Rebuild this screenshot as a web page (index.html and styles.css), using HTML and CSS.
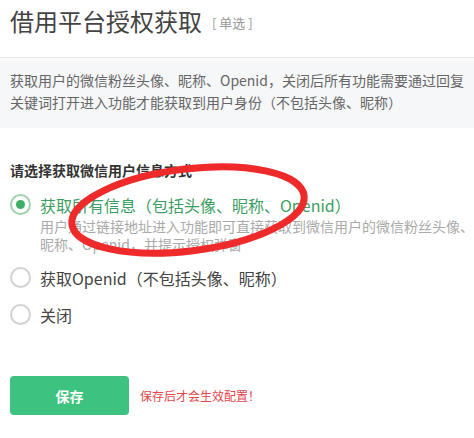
FILE: index.html
```html
<!DOCTYPE html>
<html lang="zh">
<head>
<meta charset="utf-8">
<link rel="stylesheet" href="styles.css">
</head>
<body>
<div class="page">
  <header class="head">
    <h1 class="title">借用平台授权获取</h1>
    <span class="tag">[ 单选 ]</span>
  </header>
  <div class="notice">获取用户的微信粉丝头像、昵称、Openid，关闭后所有功能需要通过回复关键词打开进入功能才能获取到用户身份（不包括头像、昵称）</div>
  <div class="section">
    <div class="question">请选择获取微信用户信息方式</div>
    <div class="option checked">
      <span class="radio"><span class="dot"></span></span>
      <div class="opt-body">
        <div class="opt-label">获取所有信息（包括头像、昵称、Openid）</div>
        <div class="opt-desc">用户通过链接地址进入功能即可直接获取到微信用户的微信粉丝头像、昵称、Openid，并提示授权弹窗</div>
      </div>
    </div>
    <div class="option">
      <span class="radio"></span>
      <div class="opt-body"><div class="opt-label">获取Openid（不包括头像、昵称）</div></div>
    </div>
    <div class="option">
      <span class="radio"></span>
      <div class="opt-body"><div class="opt-label">关闭</div></div>
    </div>
  </div>
  <div class="actions">
    <button class="btn">保存</button>
    <span class="hint">保存后才会生效配置！</span>
  </div>
  <svg class="mark" width="474" height="438" viewBox="0 0 474 438">
    <ellipse cx="188" cy="210" rx="117" ry="41" transform="rotate(-7 188 210)" fill="none" stroke="#ee2a2a" stroke-width="7"/>
  </svg>
</div>
</body>
</html>
```

FILE: styles.css
```css
* { box-sizing: border-box; }
html, body { margin: 0; padding: 0; background: #fff; }
body {
  font-family: "Noto Sans CJK SC", "Noto Sans", sans-serif;
  color: #444;
  width: 474px;
  height: 438px;
  overflow: hidden;
}
.page { position: relative; height: 438px; }
.head {
  height: 57px;
  padding: 5px 10px 0;
  display: flex;
  align-items: flex-start;
}
.title {
  margin: 0;
  font-size: 24px;
  line-height: 32px;
  font-weight: normal;
  color: #444;
}
.tag {
  font-size: 13px;
  color: #999;
  margin-left: 10px;
  line-height: 32px;
  padding-top: 2px;
}
.notice {
  background: #f6f7f9;
  border-top: 1px solid #e4e4e4;
  box-shadow: inset 0 3px 0 #fafafa;
  padding: 11px 10px 15px;
  font-size: 14px;
  line-height: 22px;
  color: #666;
}
.section { padding: 31px 0 0 10px; }
.question {
  font-size: 14px;
  line-height: 22px;
  color: #333;
  font-weight: bold;
  margin-bottom: 12px;
}
.option {
  display: flex;
  align-items: flex-start;
  gap: 9px;
  margin-bottom: 13px;
}
.radio {
  flex: none;
  width: 21px;
  height: 21px;
  margin-top: 1px;
  border: 2px solid #d2d2d2;
  border-radius: 50%;
  display: flex;
  align-items: center;
  justify-content: center;
}
.checked .radio { border-color: #9fd3b1; }
.dot {
  width: 9px;
  height: 9px;
  border-radius: 50%;
  background: #3fae66;
}
.opt-label {
  font-size: 16px;
  line-height: 24px;
  color: #444;
}
.checked .opt-label { color: #3c9e62; }
.opt-desc {
  font-size: 14px;
  line-height: 18px;
  color: #aaa;
}
.actions {
  padding: 36px 10px 0;
  display: flex;
  align-items: center;
  gap: 11px;
}
.btn {
  width: 119px;
  height: 39px;
  border: none;
  border-radius: 4px;
  background: #3dc27f;
  color: #fff;
  font-family: inherit;
  font-size: 14px;
  font-weight: bold;
}
.hint {
  font-size: 12px;
  color: #e0474c;
}
.mark {
  position: absolute;
  left: 0;
  top: 0;
  pointer-events: none;
}
```
